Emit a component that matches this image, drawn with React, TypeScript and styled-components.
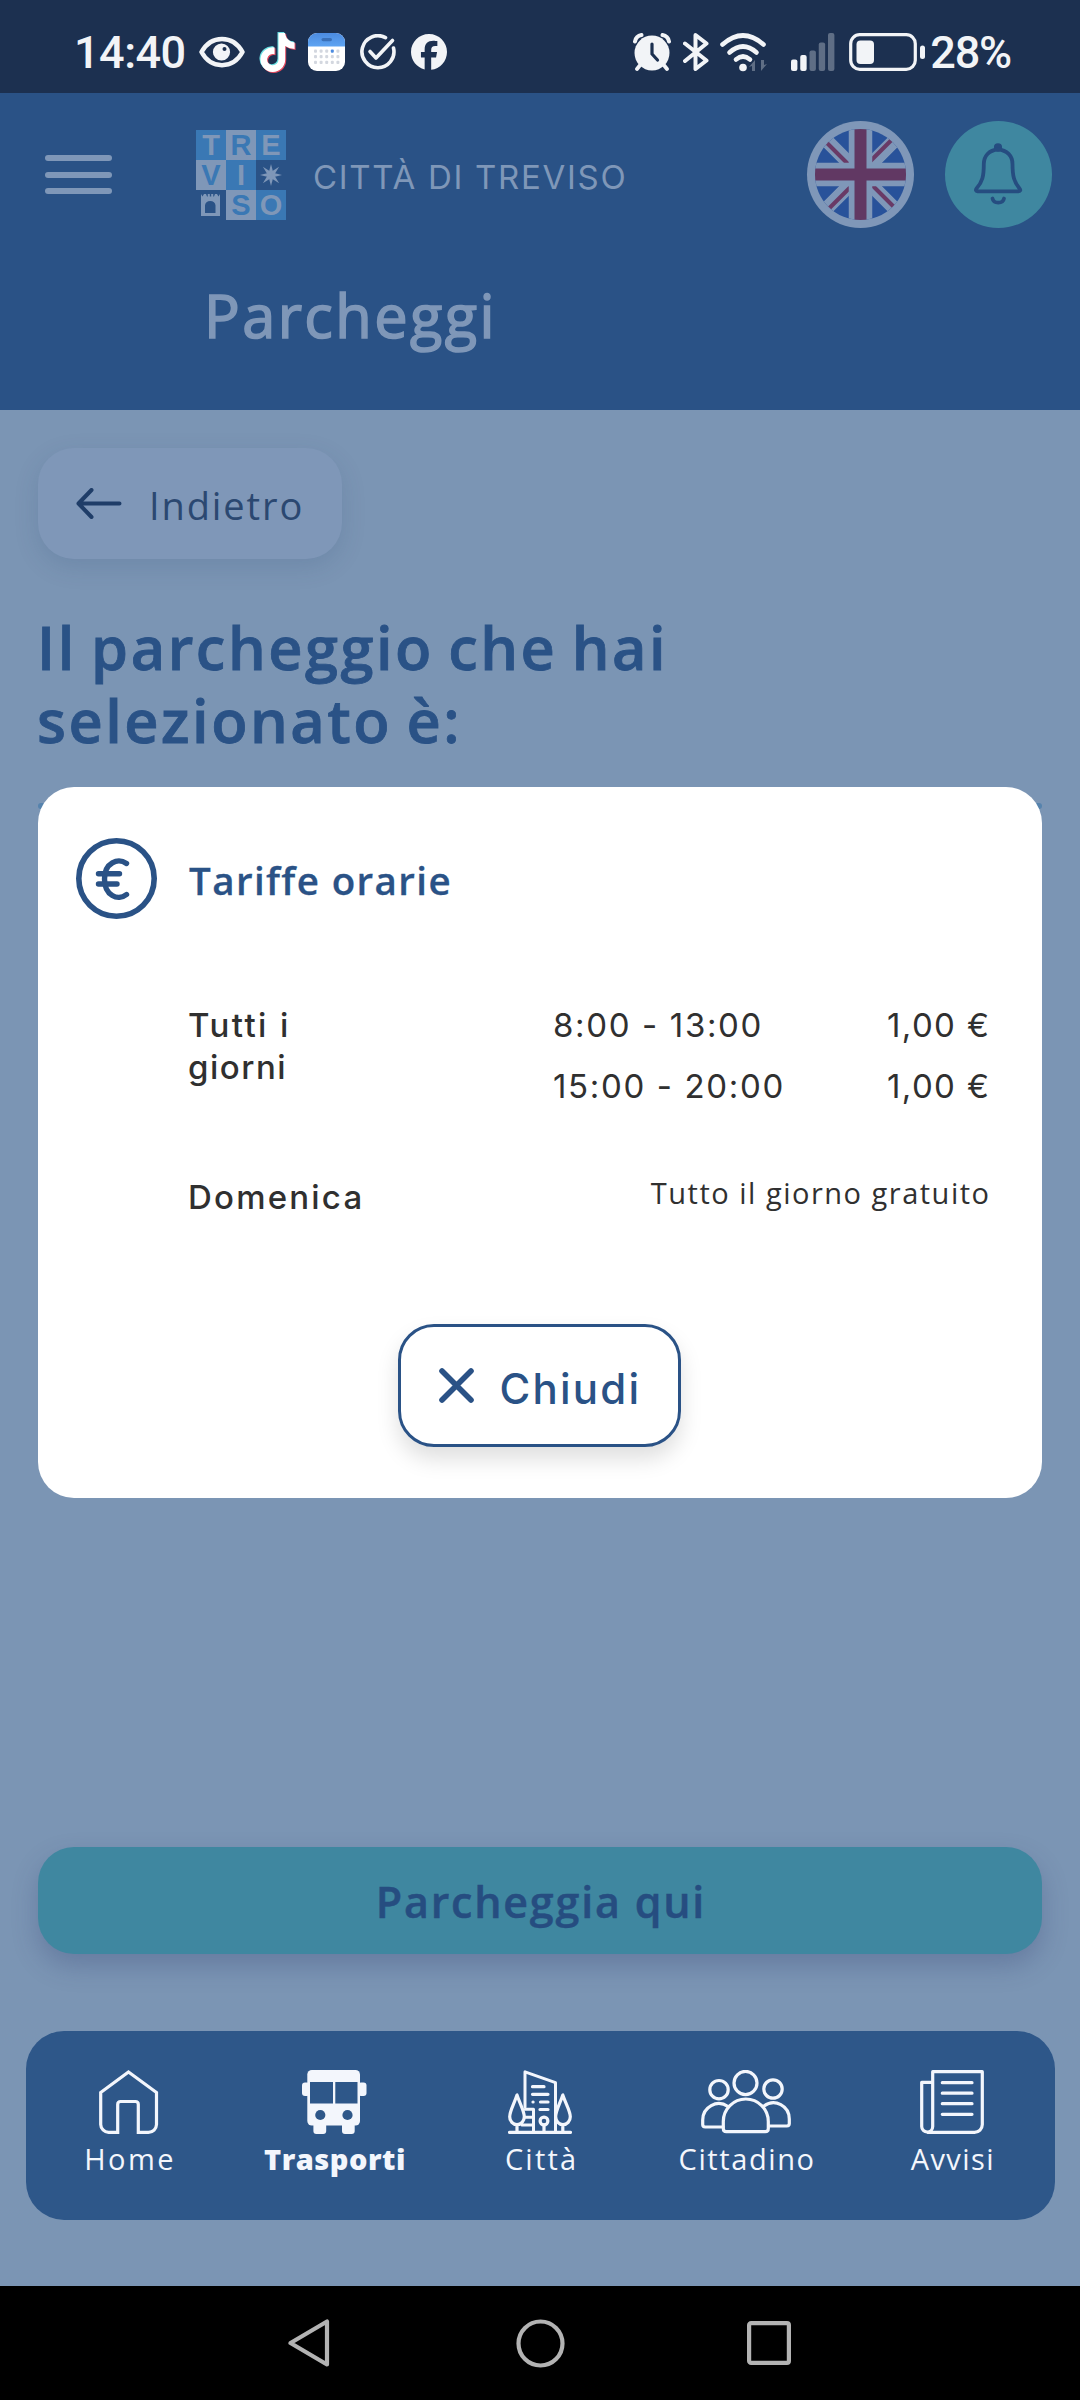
import React from "react";
import styled, { createGlobalStyle, css } from "styled-components";
import { FaFacebook, FaTiktok } from "react-icons/fa6";

const color = {
  status: "#1c3050",
  statusInk: "#f2f4f7",
  header: "#2a5286",
  page: "#7b95b4",
  faded: "#7f97b8",
  teal: "#3f87a0",
  navy: "#264d80",
  brand: "#2a5286",
  logoBlue: "#3a78b4",
  nav: "#2e5789",
  navInk: "#f3f6fc",
  ink: "#303030",
};

const GlobalStyle = createGlobalStyle`
  *, *::before, *::after { box-sizing: border-box; }
  body { margin: 0; background: ${color.page}; }
  svg { display: block; flex: none; }
`;

const Screen = styled.div`
  position: relative;
  display: flex;
  flex-direction: column;
  width: 1080px;
  height: 2400px;
  overflow: hidden;
  background: ${color.page};
  font-family: "Open Sans", "Noto Sans", sans-serif;
  font-variant-ligatures: none;
`;

type TextProps = {
  $size: number;
  $line: number;
  $weight?: number;
  $track?: number;
  $color?: string;
  /* thickens the regular cut towards a medium one */
  $stroke?: number;
  $drop?: number;
  $grotesque?: boolean;
};
const textStyle = css<TextProps>`
  ${(p) => p.$grotesque && 'font-family: Inter, "Open Sans", sans-serif;'}
  font-size: ${(p) => p.$size}px;
  line-height: ${(p) => p.$line}px;
  font-weight: ${(p) => p.$weight ?? 400};
  letter-spacing: ${(p) => p.$track ?? 0}px;
  color: ${(p) => p.$color ?? color.ink};
  -webkit-text-stroke: ${(p) => p.$stroke ?? 0}px currentColor;
  white-space: nowrap;
`;
const Text = styled.span<TextProps>`
  ${textStyle}
  margin-top: ${(p) => p.$drop ?? 0}px;
`;
/* drops the tracking after the last letter, so the text ends flush right */
const EndText = styled(Text)`
  margin-right: ${(p) => -(p.$track ?? 0)}px;
`;
/* balances the tracking after the last letter, so the text sits centred */
const MidText = styled(Text)`
  padding-left: ${(p) => p.$track ?? 0}px;
`;

/* ---------- status bar ---------- */
const StatusBar = styled.div`
  flex: none;
  height: 93px;
  display: flex;
  justify-content: space-between;
  padding: 11px 69px 0 74px;
  background: ${color.status};
  color: ${color.statusInk};
`;
const StatusGroup = styled.div`
  display: flex;
  align-items: center;
  height: 82px;
`;
const StatusText = styled.span<{ $track: number }>`
  margin-top: 2px;
  font: 500 45px/82px Roboto, sans-serif;
  letter-spacing: ${(p) => p.$track}px;
`;
const IconSlot = styled.div<{ $ml: number; $w: number; $h?: number; $mr?: number }>`
  position: relative;
  flex: none;
  width: ${(p) => p.$w}px;
  height: ${(p) => p.$h ?? 38}px;
  margin-left: ${(p) => p.$ml}px;
  margin-right: ${(p) => p.$mr ?? 0}px;
`;
const Layer = styled.div<{ $dx: number; $dy: number; $c: string }>`
  position: absolute;
  left: ${(p) => p.$dx}px;
  top: ${(p) => p.$dy}px;
  color: ${(p) => p.$c};
`;

/* ---------- header ---------- */
const Header = styled.header`
  flex: none;
  height: 317px;
  background: ${color.header};
`;
const HeaderRow = styled.div`
  display: flex;
  align-items: center;
  height: 163px;
  padding: 0 28px 0 45px;
`;
const Burger = styled.div`
  display: grid;
  gap: 10.7px;
  width: 67px;
  margin-right: 84px;
`;
const BurgerBar = styled.i`
  height: 6px;
  border-radius: 3px;
  background: ${color.faded};
`;
const Logo = styled.div`
  display: grid;
  grid-template: repeat(3, 30px) / repeat(3, 30px);
  margin: 0 27px 0 0;
`;
const LogoCell = styled.div<{ $bg: string; $fg: string }>`
  background: ${(p) => p.$bg};
  color: ${(p) => p.$fg};
  font: 700 29px/31px "Liberation Sans", Arial, sans-serif;
  text-align: center;
`;
const CircleButton = styled.div<{ $bg: string }>`
  width: 107px;
  height: 107px;
  border-radius: 50%;
  background: ${(p) => p.$bg};
`;
const HeaderActions = styled.div`
  display: flex;
  gap: 31px;
  margin-left: auto;
`;
const PageTitle = styled.h1<TextProps>`
  ${textStyle}
  margin: 20px 0 0 204px;
`;

/* ---------- page ---------- */
const Main = styled.main`
  flex: 1;
  display: flex;
  flex-direction: column;
  align-items: flex-start;
  padding: 38px 38px 66px;
`;
const BackButton = styled.div`
  display: flex;
  align-items: center;
  gap: 27px;
  width: 304px;
  height: 111px;
  padding-left: 38px;
  border-radius: 36px;
  background: ${color.faded};
  box-shadow: 0 8px 24px rgba(40, 70, 110, 0.15);
`;
const Heading = styled.h2<TextProps>`
  ${textStyle}
  word-spacing: -3.6px;
  margin: 51px 0 0 -1px;
`;
const Divider = styled.div`
  width: 100%;
  height: 6px;
  margin-top: 47px;
  border-radius: 3px;
  background: #5683ad;
`;
const ParkButton = styled.div`
  display: flex;
  justify-content: center;
  width: 100%;
  height: 107px;
  margin-top: auto;
  border-radius: 36px;
  background: ${color.teal};
  box-shadow: 0 12px 26px rgba(50, 60, 110, 0.28);
`;
const NavBar = styled.nav`
  flex: none;
  display: grid;
  grid-template-columns: repeat(5, 1fr);
  height: 189px;
  margin: 11px 25px 66px 26px;
  border-radius: 38px;
  background: ${color.nav};
`;
const NavItem = styled.div`
  display: flex;
  flex-direction: column;
  align-items: center;
  padding-top: 39px;
  gap: 5px;
`;
const SystemBar = styled.div`
  flex: none;
  display: flex;
  justify-content: space-between;
  align-items: center;
  height: 114px;
  padding: 0 289px 0 288px;
  background: #000;
`;

/* ---------- dialog ---------- */
const Dialog = styled.section`
  position: absolute;
  top: 787px;
  left: 38px;
  width: 1004px;
  height: 711px;
  display: flex;
  flex-direction: column;
  padding: 51px 53px 51px 38px;
  border-radius: 36px;
  background: #fff;
`;
const DialogHead = styled.div`
  display: flex;
  align-items: center;
  gap: 32px;
  height: 81px;
`;
const Rates = styled.div`
  display: flex;
  flex-direction: column;
  padding: 85px 0 0 112px;
`;
const RateRow = styled.div`
  display: grid;
  grid-template-columns: 365px 1fr auto;
  align-items: start;
`;
const FreeRow = styled.div`
  display: flex;
  justify-content: space-between;
  align-items: flex-start;
  margin-top: 45px;
`;
const Stack = styled.div`
  display: flex;
  flex-direction: column;
`;
const CloseButton = styled.div`
  display: flex;
  align-items: center;
  gap: 26px;
  align-self: center;
  width: 283px;
  height: 123px;
  margin: auto 0 0 13px;
  padding-left: 38px;
  border: 3px solid ${color.brand};
  border-radius: 36px;
  box-shadow: 0 12px 22px rgba(0, 0, 0, 0.13);
`;

/* ---------- status icons ---------- */
const Eye = () => (
  <svg width="46" height="32" viewBox="0 0 46 32">
    <path d="M2.5 16C12-1.5 34-1.5 43.500 16 34 33.500 12 33.500 2.500 16Z" fill="none" stroke="currentColor" strokeWidth="4.500" strokeLinejoin="round" />
    <circle cx="22.500" cy="16" r="8.600" fill="currentColor" />
    <circle cx="25.500" cy="13" r="2" fill={color.status} />
  </svg>
);
const Calendar = () => (
  <svg width="37" height="38" viewBox="0 0 37 38">
    <defs>
      <linearGradient id="calTop" x1="0" y1="0" x2="0" y2="1">
        <stop offset="0" stopColor="#4c8be0" />
        <stop offset="1" stopColor="#5ea4f2" />
      </linearGradient>
    </defs>
    <rect width="37" height="38" rx="9" fill="#fff" />
    <path d="M0 13.500V9a9 9 0 0 1 9-9h19a9 9 0 0 1 9 9v4.500Z" fill="url(#calTop)" />
    <rect x="13.500" y="5" width="10.500" height="3.200" rx="1.600" fill="#3a70b8" />
    {[0, 1, 2].map((r) =>
      [0, 1, 2, 3, 4].map((c) => (
        <rect key={`${r}-${c}`} x={6 + c * 5.6} y={16.5 + r * 5.6} width="3" height="3.200" rx="1" fill={r === 0 && c === 3 ? "#4c8be0" : "#d3d7df"} />
      ))
    )}
  </svg>
);
const CheckRing = () => (
  <svg width="36" height="36" viewBox="0 0 36 36" fill="none" stroke="currentColor" strokeWidth="3.600" strokeLinecap="round" strokeLinejoin="round">
    <path d="M25.500 3.600A16 16 0 1 0 33.500 14" />
    <path d="M10 17.500l6 6.500L32.500 6.500" />
  </svg>
);
const Alarm = () => (
  <svg width="38" height="38" viewBox="0 0 38 38">
    <g fill="none" stroke="currentColor" strokeLinecap="round">
      <path d="M2 8.500A8 8 0 0 1 8.500 2M36 8.500A8 8 0 0 0 29.500 2" strokeWidth="4" />
      <path d="M8 31l-4 5M30 31l4 5" strokeWidth="3.800" />
    </g>
    <circle cx="19" cy="20" r="17.500" fill="currentColor" />
    <path d="M19 11v10l5.500 6" fill="none" stroke={color.status} strokeWidth="3.200" strokeLinecap="round" />
  </svg>
);
const Bluetooth = () => (
  <svg width="26" height="38" viewBox="0 0 26 38" fill="none" stroke="currentColor" strokeWidth="4" strokeLinejoin="round" strokeLinecap="round">
    <path d="M2 10.500L23.500 27.500 12.500 36V2l11 8.500L2 28" />
  </svg>
);
const Wifi = () => (
  <svg width="48" height="39" viewBox="0 0 48 39">
    <g fill="none" stroke="currentColor" strokeWidth="4.600" strokeLinecap="round">
      <path d="M2.500 11.500Q23 -6.500 43.500 11.500" />
      <path d="M9.500 19.500Q23 7.500 36.500 19.500" />
      <path d="M16 26.500Q23 20.500 30 26.500" />
    </g>
    <circle cx="23" cy="34.500" r="3.800" fill="currentColor" />
    <path d="M29 34l6-7v11h-3v-5ZM47 31l-6 7V27h3v5Z" fill="#5f6e85" />
  </svg>
);
const Signal = () => (
  <svg width="44" height="38" viewBox="0 0 44 38">
    {[11.5, 16, 20.5, 28.5, 38].map((h, i) => (
      <rect key={h} x={i * 9.25} y={38 - h} width="6.400" height={h} rx="2" fill={i < 2 ? "currentColor" : "#5f6e85"} />
    ))}
  </svg>
);
const Battery = () => (
  <svg width="76" height="38" viewBox="0 0 76 38">
    <rect x="1.700" y="1.700" width="64.600" height="34.600" rx="9" fill="none" stroke="currentColor" strokeWidth="3.200" />
    <rect x="7.500" y="7.500" width="17.500" height="23.500" rx="4" fill="currentColor" />
    <rect x="71" y="12.500" width="5" height="13.500" rx="2.500" fill="currentColor" />
  </svg>
);

/* ---------- header icons ---------- */
const Star = () => (
  <svg width="30" height="30" viewBox="-15 -15 30 30" fill={color.faded}>
    {[0, 45, 90, 135, 180, 225, 270, 315].map((a) => (
      <path key={a} d={`M-2.100 -3L0 ${a % 90 ? -11.5 : -11}L2.100 -3L0 2Z`} transform={`rotate(${a})`} />
    ))}
  </svg>
);
const Castle = () => (
  <svg width="30" height="30" viewBox="0 0 30 30">
    <path fillRule="evenodd" fill={color.faded} d="M5 4l1.500 2.500L8 4h2l1 2.500h.800V4h2v2.500h1.400V4h2v2.500h.800L19 4h2l1.500 2.500L24 4v22H5ZM9 23h10.500v-7.500a5.200 4.500 0 0 0-10.500 0Z" />
  </svg>
);
const Flag = () => (
  <svg width="107" height="107" viewBox="0 0 107 107">
    <defs>
      <clipPath id="disc"><circle cx="53.500" cy="53.500" r="45.500" /></clipPath>
    </defs>
    <g clipPath="url(#disc)">
      <rect width="107" height="107" fill="#28529a" />
      <path d="M0 0L107 107M107 0L0 107" stroke="#7f97b8" strokeWidth="13.700" />
      <g stroke="#693a66" strokeWidth="4">
        <path d="M19.500 21.500L45 47M84.500 19L60 43.500M62 61L88 87M22.500 87L48 61.500" />
      </g>
      <path d="M53.500 0V107M0 53.500H107" stroke="#7f97b8" strokeWidth="23.500" />
      <path d="M53.500 0V107M0 53.500H107" stroke="#613863" strokeWidth="12" />
    </g>
  </svg>
);
const Bell = () => (
  <svg width="107" height="107" viewBox="0 0 107 107" fill="none" stroke={color.navy} strokeWidth="3.800" strokeLinecap="round" strokeLinejoin="round">
    <circle cx="53" cy="26.300" r="2.200" fill={color.navy} />
    <path d="M53 28.500C44 29 38.800 35 38.800 43C38.800 55 37.500 61 31.500 67.500C30.500 69 30.800 70.300 32.500 70.300H73.500C75.500 70.300 75.800 69 74.500 67.500C69 61 67.500 55 67.500 43C67.500 35 62 29 53 28.500Z" />
    <path d="M47.500 77.500C48.500 83 58 83 59 77.500" />
  </svg>
);

/* ---------- body icons ---------- */
const ArrowLeft = () => (
  <svg width="46" height="31" viewBox="0 0 46 31" fill="none" stroke="#1f3d68" strokeWidth="4" strokeLinecap="round" strokeLinejoin="round">
    <path d="M2.500 15.500H43.500M15.500 2L2.500 15.500L15.500 29" />
  </svg>
);
const EuroRing = () => (
  <svg width="81" height="81" viewBox="0 0 81 81" fill="none" stroke={color.brand} strokeLinecap="round">
    <circle cx="40.500" cy="40.500" r="37.700" strokeWidth="5.600" />
    <path d="M50.500 25.500C42 19.500 28.500 24.500 28.500 41S42 63.500 50.500 56.500" strokeWidth="5.400" />
    <path d="M22.500 35.800H43.500M22.500 46H41" strokeWidth="5.400" />
  </svg>
);
const Cross = () => (
  <svg width="35" height="35" viewBox="0 0 35 35" fill="none" stroke={color.brand} strokeWidth="5.600" strokeLinecap="round">
    <path d="M3 3L32 32M32 3L3 32" />
  </svg>
);

/* ---------- navigation icons ---------- */
const line = { fill: "none", stroke: color.navInk, strokeWidth: 3.2, strokeLinecap: "round", strokeLinejoin: "round" } as const;
const HomeIcon = () => (
  <svg width="60" height="64" viewBox="0 0 60 64" {...line} strokeLinecap="butt" strokeLinejoin="miter">
    <path d="M29.500 2L57.500 22.500V54.500A8 8 0 0 1 49.500 62.300H39.300V34.500Q39.300 31.500 36.300 31.500H21.700Q18.700 31.500 18.700 34.500V62.300H9.500A8 8 0 0 1 1.700 54.500V22.500Z" />
  </svg>
);
const BusIcon = () => (
  <svg width="65" height="64" viewBox="0 0 65 64">
    <g fill={color.navInk}>
      <rect x="5.300" y="0" width="52.700" height="55.500" rx="4.500" />
      <rect x="0" y="12.500" width="8" height="13.500" rx="3" />
      <rect x="56" y="12.500" width="8.500" height="13.500" rx="3" />
      <rect x="11.400" y="50" width="12.800" height="14" rx="3" />
      <rect x="40" y="50" width="12.700" height="14" rx="3" />
    </g>
    <g fill={color.nav}>
      <path d="M8 12V33.500H31V12ZM33.300 12V33.500H55.500V12Z" />
      <circle cx="18.300" cy="45" r="5.100" />
      <circle cx="45.500" cy="45" r="5.100" />
    </g>
  </svg>
);
const CityIcon = () => (
  <svg width="64" height="64" viewBox="0 0 64 64" {...line}>
    <path d="M17 37V1.800L47.500 12.700V61M17 39.300H25.500V61M17 47.300H25M14 55H25" strokeWidth="3" />
    <path d="M24.500 16.700H36M24.500 24.300H40M25 32h.1M32.500 32H40M32 39.500H40" />
    <path d="M9 25C6 34 1.700 41 1.700 46.700A7.300 8 0 0 0 16.300 46.700C16.300 41 12 34 9 25ZM9 55V61" />
    <path d="M54.800 25C51.800 34 47.700 41 47.700 46.700A7.300 8 0 0 0 62.300 46.700C62.300 41 57.800 34 54.800 25ZM54.800 55V61" />
    <circle cx="36" cy="51" r="3.900" />
    <path d="M36 55V61M1.500 62.400H62.500" />
  </svg>
);
const PeopleIcon = () => (
  <svg width="90" height="64" viewBox="0 0 90 64" {...line}>
    <ellipse cx="44.500" cy="13" rx="11.500" ry="11.600" />
    <circle cx="18" cy="19.700" r="9.200" />
    <circle cx="72" cy="19" r="9.200" />
    <path d="M22.300 51.500a22.500 22.500 0 0 1 45 0V58.500Q67.300 61.600 64.300 61.600H25.300Q22.300 61.600 22.300 58.500Z" />
    <path d="M27 36.500C16 29 1.700 37 1.700 50V54.500Q1.700 57 4.200 57H22M63 36C74 28 88.300 36 88.300 49V53.500Q88.300 56 85.800 56H68" />
  </svg>
);
const NewsIcon = () => (
  <svg width="64" height="64" viewBox="0 0 64 64" {...line}>
    <path d="M12.700 12.300H1.700V56.500A5.500 5.500 0 0 0 12.700 56.500V1.700H62.300V54.500A7.800 7.800 0 0 1 54.500 62.300H7.500" />
    <path d="M22.300 12.700H52M22.300 23.200H52M22.300 33.700H52M22.300 44.300H52" />
  </svg>
);

const navItems = [
  { label: "Home", Icon: HomeIcon, weight: 400, track: 2.5 },
  { label: "Trasporti", Icon: BusIcon, weight: 800, track: 0.5 },
  { label: "Città", Icon: CityIcon, weight: 400, track: 2.2 },
  { label: "Cittadino", Icon: PeopleIcon, weight: 400, track: 1.6 },
  { label: "Avvisi", Icon: NewsIcon, weight: 400, track: 1.4 },
];

const slots = [
  { hours: "8:00 - 13:00", price: "1,00 €", line: 42 },
  { hours: "15:00 - 20:00", price: "1,00 €", line: 80 },
];

const L = color.faded;
const B = color.logoBlue;
const N = "transparent";

export default function App() {
  return (
    <Screen>
      <GlobalStyle />
      <StatusBar>
        <StatusGroup>
          <StatusText $track={-0.5}>14:40</StatusText>
          <IconSlot $ml={13} $w={46} $h={32}><Eye /></IconSlot>
          <IconSlot $ml={13} $w={38} $h={41}>
            <Layer $dx={-1} $dy={0} $c="#69dfe2"><FaTiktok size={39} /></Layer>
            <Layer $dx={1.5} $dy={2} $c="#e0495f"><FaTiktok size={39} /></Layer>
            <Layer $dx={0.3} $dy={1} $c="#fff"><FaTiktok size={39} /></Layer>
          </IconSlot>
          <IconSlot $ml={12} $w={37}><Calendar /></IconSlot>
          <IconSlot $ml={15} $w={36} $h={36}><CheckRing /></IconSlot>
          <IconSlot $ml={15} $w={36} $h={36}><FaFacebook size={36} /></IconSlot>
        </StatusGroup>
        <StatusGroup>
          <IconSlot $ml={0} $w={38}><Alarm /></IconSlot>
          <IconSlot $ml={12} $w={26}><Bluetooth /></IconSlot>
          <IconSlot $ml={11} $w={48}><Wifi /></IconSlot>
          <IconSlot $ml={23} $w={44}><Signal /></IconSlot>
          <IconSlot $ml={14} $w={76} $mr={5}><Battery /></IconSlot>
          <StatusText $track={-1.2}>28%</StatusText>
        </StatusGroup>
      </StatusBar>

      <Header>
        <HeaderRow>
          <Burger><BurgerBar /><BurgerBar /><BurgerBar /></Burger>
          <Logo>
            <LogoCell $bg={B} $fg={L}>T</LogoCell>
            <LogoCell $bg={L} $fg={B}>R</LogoCell>
            <LogoCell $bg={B} $fg={L}>E</LogoCell>
            <LogoCell $bg={L} $fg={B}>V</LogoCell>
            <LogoCell $bg={B} $fg={L}>I</LogoCell>
            <LogoCell $bg={N} $fg={L}><Star /></LogoCell>
            <LogoCell $bg={N} $fg={L}><Castle /></LogoCell>
            <LogoCell $bg={L} $fg={B}>S</LogoCell>
            <LogoCell $bg={B} $fg={L}>O</LogoCell>
          </Logo>
          <Text $grotesque $size={33} $line={44} $track={1.7} $drop={5} $color={L}>CITTÀ DI TREVISO</Text>
          <HeaderActions>
            <CircleButton $bg={L}><Flag /></CircleButton>
            <CircleButton $bg={color.teal}><Bell /></CircleButton>
          </HeaderActions>
        </HeaderRow>
        <PageTitle $size={59.5} $line={78} $track={2.4} $stroke={1.6} $color={L}>Parcheggi</PageTitle>
      </Header>

      <Main>
        <BackButton>
          <ArrowLeft />
          <Text $size={38} $line={111} $track={1.9} $drop={3} $color="#2b4871">Indietro</Text>
        </BackButton>
        <Heading $size={59.5} $line={73} $weight={600} $track={2.5} $stroke={0.8} $color={color.brand}>
          Il parcheggio che hai
          <br />
          selezionato è:
        </Heading>
        <Divider />
        <ParkButton>
          <MidText $size={43} $line={107} $weight={600} $track={1.8} $stroke={0.5} $drop={1} $color={color.navy}>Parcheggia qui</MidText>
        </ParkButton>
      </Main>

      <NavBar>
        {navItems.map(({ label, Icon, weight, track }) => (
          <NavItem key={label}>
            <Icon />
            <MidText $size={29} $line={40} $weight={weight} $track={track} $color={color.navInk}>{label}</MidText>
          </NavItem>
        ))}
      </NavBar>

      <SystemBar>
        <svg width="46" height="50" viewBox="0 0 46 50" fill="none" stroke="#b3b3b3" strokeWidth="4.200" strokeLinejoin="round">
          <path d="M39 3.500V46.500L2.500 25Z" />
        </svg>
        <svg width="49" height="49" viewBox="0 0 49 49" fill="none" stroke="#b3b3b3" strokeWidth="4.200">
          <circle cx="24.500" cy="24.500" r="22" />
        </svg>
        <svg width="44" height="44" viewBox="0 0 44 44" fill="none" stroke="#b3b3b3" strokeWidth="4.200">
          <rect x="2.100" y="2.100" width="39.800" height="39.800" rx="2" />
        </svg>
      </SystemBar>

      <Dialog>
        <DialogHead>
          <EuroRing />
          <Text $size={38.5} $line={81} $weight={600} $track={1.4} $stroke={0.3} $drop={4} $color={color.brand}>Tariffe orarie</Text>
        </DialogHead>
        <Rates>
          <RateRow>
            <Stack>
              <Text $grotesque $size={33} $line={42} $weight={500} $track={2.4}>Tutti i</Text>
              <Text $grotesque $size={33} $line={42} $weight={500} $track={1.5}>giorni</Text>
            </Stack>
            <Stack>
              {slots.map((s) => (
                <Text key={s.hours} $grotesque $size={33} $line={s.line} $track={1.65}>{s.hours}</Text>
              ))}
            </Stack>
            <Stack>
              {slots.map((s) => (
                <EndText key={s.hours} $grotesque $size={33} $line={s.line} $track={1.4}>{s.price}</EndText>
              ))}
            </Stack>
          </RateRow>
          <FreeRow>
            <Text $grotesque $size={33} $line={46} $weight={500} $track={2.2} $drop={3}>Domenica</Text>
            <EndText $size={29} $line={42} $track={1.5} $drop={1}>Tutto il giorno gratuito</EndText>
          </FreeRow>
        </Rates>
        <CloseButton>
          <Cross />
          <Text $grotesque $size={42} $line={110} $weight={500} $track={2.2} $drop={6} $color={color.brand}>Chiudi</Text>
        </CloseButton>
      </Dialog>
    </Screen>
  );
}
